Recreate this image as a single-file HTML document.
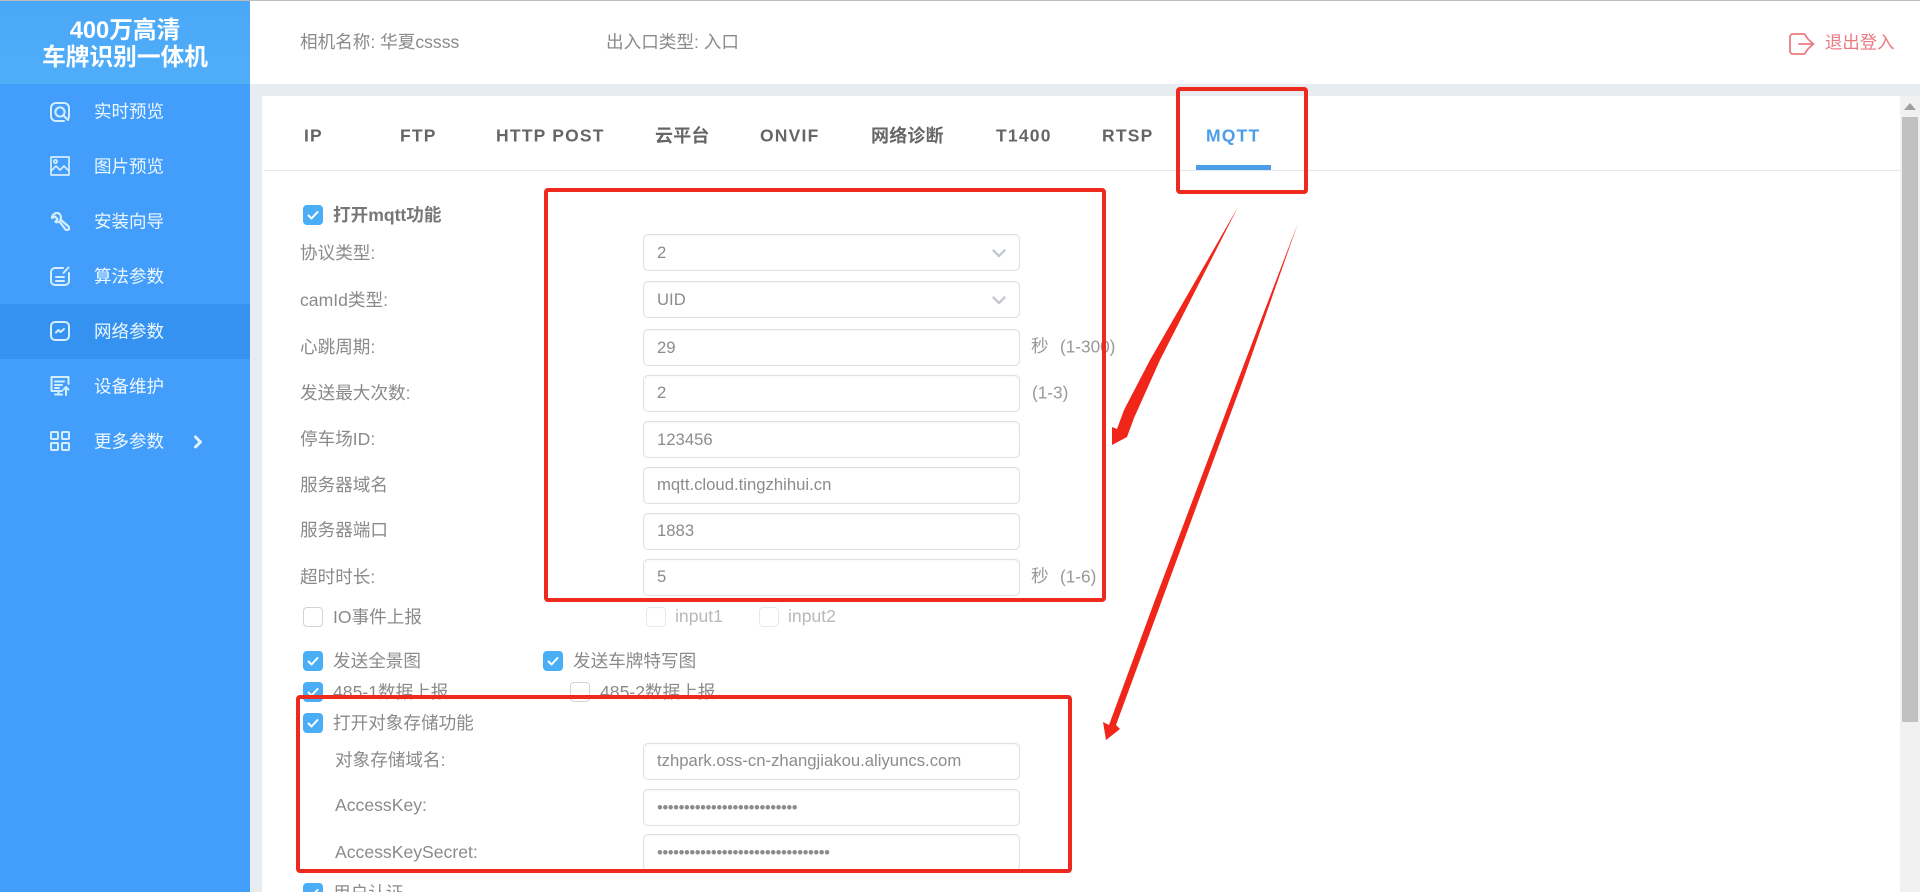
<!DOCTYPE html>
<html lang="zh-CN">
<head>
<meta charset="utf-8">
<title>400万高清车牌识别一体机</title>
<style>
html,body{margin:0;padding:0;width:1920px;height:892px;overflow:hidden;background:#e7ecf1;font-family:"Liberation Sans","Noto Sans CJK SC",sans-serif}
#wrap{position:relative;width:1920px;height:892px;overflow:hidden;contain:paint}
.a{position:absolute}
.t{position:absolute;white-space:nowrap;line-height:1;transform:translateY(-50%);font-size:17.6px;color:#8a8a8a}
#side{left:0;top:0;width:250px;height:892px;background:#429dfb}
#logo{left:0;top:0;width:250px;height:84px;background:linear-gradient(#4aa8f8,#4fadf8)}
#top{left:250px;top:0;width:1670px;height:84px;background:#fff}
#line{left:0;top:0;width:1920px;height:1px;background:#bcbcbc;z-index:3}
#card{left:262px;top:96px;width:1638px;height:796px;background:#fff;overflow:hidden}
#sb{left:1900px;top:96px;width:20px;height:796px;background:#f1f1f1}
#thumb{left:1902px;top:117px;width:16px;height:605px;background:#c1c1c1}
.m{position:absolute;left:94px;font-size:17.5px;color:#eef8ff;line-height:1;transform:translateY(-50%);white-space:nowrap}
.ic{position:absolute;left:50px;width:20px;height:20px;fill:none;stroke:#d5eeff;stroke-width:2;stroke-linecap:round;stroke-linejoin:round}
.tb{position:absolute;top:136px;font-size:17.5px;font-weight:bold;color:#666;letter-spacing:1.2px;line-height:1;transform:translateY(-50%);white-space:nowrap}
.i{position:absolute;left:643px;width:377px;height:37px;box-sizing:border-box;border:1px solid #dcdfe6;border-radius:5px;background:#fff;box-shadow:inset 0 1px 2px rgba(0,0,0,.04);font-size:16.7px;color:#8c8c8c;line-height:34px;padding-left:13px;white-space:nowrap;overflow:hidden}
.c{position:absolute;width:20px;height:20px;box-sizing:border-box;border-radius:4px;background:#49aef5}
.c svg{position:absolute;left:0;top:0;width:20px;height:20px;fill:none;stroke:#fff;stroke-width:2;stroke-linecap:round;stroke-linejoin:round}
.u{position:absolute;width:20px;height:20px;box-sizing:border-box;border-radius:4px;background:#fff;border:1px solid #d0d3d9}
.u.d{border-color:#e6e8ec}
.sel{position:absolute;left:992px;width:14px;height:9px;fill:none;stroke:#c4c8cf;stroke-width:2.4;stroke-linecap:round;stroke-linejoin:round}
.r{position:absolute;box-sizing:border-box;border:4px solid #ee2a1e;border-radius:4px;z-index:5}
</style>
</head>
<body>
<div id="wrap">
<div id="side" class="a"></div>
<div id="logo" class="a"></div>
<div id="top" class="a"></div>
<div id="line" class="a"></div>
<div id="card" class="a"></div>
<div id="sb" class="a"></div>
<div id="thumb" class="a"></div>
<svg class="a" style="left:1904px;top:103px;width:12px;height:8px;fill:#a0a0a0"><path d="M6 0L12 7H0Z"/></svg>

<div class="t" style="left:0;width:250px;top:32px;text-align:center;font-size:23.7px;font-weight:bold;color:#fff">400万高清</div>
<div class="t" style="left:0;width:250px;top:59px;text-align:center;font-size:23.7px;font-weight:bold;color:#fff">车牌识别一体机</div>

<div class="a" style="left:0;top:304px;width:250px;height:55px;background:#3592f0"></div>

<svg class="ic" style="top:102px" viewBox="0 0 20 20"><path d="M14 19H6a5 5 0 0 1-5-5V6a5 5 0 0 1 5-5h8a5 5 0 0 1 5 5v8a5 5 0 0 1-1 3"/><circle cx="10" cy="10" r="4.600"/><path d="M13.500 13.500L18 18"/></svg>
<div class="m" style="top:112px">实时预览</div>
<svg class="ic" style="top:156px;stroke-width:1.700" viewBox="0 0 20 20"><rect x="1" y="1" width="18" height="18"/><circle cx="5.500" cy="5.500" r="1.600"/><path d="M1 15l5-5 4 4 4-4 5 5"/></svg>
<div class="m" style="top:167px">图片预览</div>
<svg class="ic" style="top:211px;stroke-width:2.200" viewBox="0 0 20 20"><path d="M9 2.500A5 5 0 0 0 2 7L5 5.500 7.500 8 5.500 11A5 5 0 0 0 9.500 10.500L15.500 18.500A2 2 0 0 0 18.500 15.500L10.500 8.500A5 5 0 0 0 9 2.500Z"/></svg>
<div class="m" style="top:222px">安装向导</div>
<svg class="ic" style="top:266px" viewBox="0 0 20 20"><path d="M13 2H5a4 4 0 0 0-4 4v9a4 4 0 0 0 4 4h10a4 4 0 0 0 4-4V7"/><path d="M18.500 1.500L13.500 7"/><path d="M6 11h8M6 15h8"/></svg>
<div class="m" style="top:277px">算法参数</div>
<svg class="ic" style="top:321px" viewBox="0 0 20 20"><rect x="1" y="1" width="18" height="18" rx="4"/><path d="M6 11.500l2.500-2.500 2 2 3.500-3"/></svg>
<div class="m" style="top:332px">网络参数</div>
<svg class="ic" style="top:376px" viewBox="0 0 20 20"><path d="M12 15H1.500V1h17v7"/><path d="M5 5.500h9M5 9h7M5 12h4M5 18.500h7M8.500 15v3"/><path d="M16 19v-8M13.500 13.500L16 11l2.500 2.500"/></svg>
<div class="m" style="top:387px">设备维护</div>
<svg class="ic" style="top:431px" viewBox="0 0 20 20"><rect x="1" y="1" width="7" height="7" rx="1"/><rect x="12" y="1" width="7" height="7" rx="1"/><rect x="1" y="12" width="7" height="7" rx="1"/><rect x="12" y="12" width="7" height="7" rx="1"/></svg>
<div class="m" style="top:442px">更多参数</div>
<svg class="a" style="left:193px;top:435px;width:10px;height:14px;fill:none;stroke:#e4f4ff;stroke-width:3;stroke-linecap:round;stroke-linejoin:round"><path d="M2.500 2L7.500 7L2.500 12"/></svg>

<div class="t" style="left:300px;top:43px">相机名称: 华夏cssss</div>
<div class="t" style="left:606px;top:43px">出入口类型: 入口</div>
<svg class="a" style="left:1789px;top:33px;width:26px;height:22px;fill:none;stroke:#ec7b80;stroke-width:1.800;stroke-linecap:round;stroke-linejoin:round"><path d="M19 6L15.500 1H4a3 3 0 0 0-3 3v14a3 3 0 0 0 3 3h11.500l3.500-5"/><path d="M10 11h14M20 7l4.500 4-4.500 4"/></svg>
<div class="t" style="left:1825px;top:43px;color:#ea7a80;font-size:17.4px">退出登入</div>

<div class="tb" style="left:304px">IP</div>
<div class="tb" style="left:400px">FTP</div>
<div class="tb" style="left:496px">HTTP POST</div>
<div class="tb" style="left:655px;letter-spacing:.2px;font-size:18px">云平台</div>
<div class="tb" style="left:760px">ONVIF</div>
<div class="tb" style="left:871px;letter-spacing:.2px;font-size:18px">网络诊断</div>
<div class="tb" style="left:996px">T1400</div>
<div class="tb" style="left:1102px">RTSP</div>
<div class="tb" style="left:1206px;color:#4a9de8">MQTT</div>
<div class="a" style="left:264px;top:170px;width:1636px;height:1px;background:#e4e7ed"></div>
<div class="a" style="left:1196px;top:165px;width:75px;height:5px;background:#4a9de8"></div>

<div class="c" style="left:303px;top:205px"><svg viewBox="0 0 20 20"><path d="M5.500 10.500l3 3 6-6.500"/></svg></div>
<div class="t" style="left:333px;top:216px;font-weight:bold;color:#777">打开mqtt功能</div>

<div class="t" style="left:300px;top:254px">协议类型:</div>
<div class="t" style="left:300px;top:301px">camId类型:</div>
<div class="t" style="left:300px;top:348px">心跳周期:</div>
<div class="t" style="left:300px;top:394px">发送最大次数:</div>
<div class="t" style="left:300px;top:440px">停车场ID:</div>
<div class="t" style="left:300px;top:486px">服务器域名</div>
<div class="t" style="left:300px;top:531px">服务器端口</div>
<div class="t" style="left:300px;top:578px">超时时长:</div>

<div class="i" style="top:234px;line-height:35px">2</div>
<svg class="sel" style="top:249px"><path d="M1.500 1.500L7 7L12.500 1.500"/></svg>
<div class="i" style="top:281px;line-height:35px">UID</div>
<svg class="sel" style="top:296px"><path d="M1.500 1.500L7 7L12.500 1.500"/></svg>
<div class="i" style="top:329px;line-height:36px">29</div>
<div class="i" style="top:375px">2</div>
<div class="i" style="top:421px;line-height:36px">123456</div>
<div class="i" style="top:467px">mqtt.cloud.tingzhihui.cn</div>
<div class="i" style="top:513px">1883</div>
<div class="i" style="top:559px">5</div>

<div class="t" style="left:1031px;top:347px;color:#999">秒</div>
<div class="t" style="left:1060px;top:347px;color:#999;font-size:17.2px">(1-300)</div>
<div class="t" style="left:1032px;top:393px;color:#999;font-size:17.2px">(1-3)</div>
<div class="t" style="left:1031px;top:577px;color:#999">秒</div>
<div class="t" style="left:1060px;top:577px;color:#999;font-size:17.2px">(1-6)</div>

<div class="u" style="left:303px;top:607px"></div>
<div class="t" style="left:333px;top:618px">IO事件上报</div>
<div class="u d" style="left:646px;top:607px"></div>
<div class="t" style="left:675px;top:617px;color:#b8b8b8">input1</div>
<div class="u d" style="left:759px;top:607px"></div>
<div class="t" style="left:788px;top:617px;color:#b8b8b8">input2</div>

<div class="c" style="left:303px;top:651px"><svg viewBox="0 0 20 20"><path d="M5.500 10.500l3 3 6-6.500"/></svg></div>
<div class="t" style="left:333px;top:662px">发送全景图</div>
<div class="c" style="left:543px;top:651px"><svg viewBox="0 0 20 20"><path d="M5.500 10.500l3 3 6-6.500"/></svg></div>
<div class="t" style="left:573px;top:662px">发送车牌特写图</div>

<div class="c" style="left:303px;top:682px"><svg viewBox="0 0 20 20"><path d="M5.500 10.500l3 3 6-6.500"/></svg></div>
<div class="t" style="left:333px;top:693px">485-1数据上报</div>
<div class="u" style="left:570px;top:682px"></div>
<div class="t" style="left:600px;top:693px">485-2数据上报</div>

<div class="c" style="left:303px;top:713px"><svg viewBox="0 0 20 20"><path d="M5.500 10.500l3 3 6-6.500"/></svg></div>
<div class="t" style="left:333px;top:724px">打开对象存储功能</div>

<div class="t" style="left:335px;top:761px">对象存储域名:</div>
<div class="t" style="left:335px;top:806px">AccessKey:</div>
<div class="t" style="left:335px;top:853px">AccessKeySecret:</div>
<div class="i" style="top:743px">tzhpark.oss-cn-zhangjiakou.aliyuncs.com</div>
<div class="i" style="top:789px;letter-spacing:-.45px;line-height:35px">••••••••••••••••••••••••••</div>
<div class="i" style="top:834px;letter-spacing:-.45px;line-height:35px">••••••••••••••••••••••••••••••••</div>

<div class="c" style="left:303px;top:883px"><svg viewBox="0 0 20 20"><path d="M5.500 10.500l3 3 6-6.500"/></svg></div>
<div class="t" style="left:333px;top:894px">用户认证</div>

<div class="r" style="left:544px;top:188px;width:562px;height:414px"></div>
<div class="r" style="left:1176px;top:87px;width:132px;height:107px"></div>
<div class="r" style="left:296px;top:695px;width:776px;height:178px"></div>

<svg class="a" style="left:0;top:0;width:1920px;height:892px;z-index:6;pointer-events:none">
<polygon fill="#f0261a" points="1238,207 1160,360 1134,418 1127,437 1112,445 1112,427 1117,429 1124,410 1150,360"/>
<polygon fill="#f0261a" points="1298,223 1243,380 1162,600 1116,725 1120,729 1106,740 1103,722 1109,725 1155,600 1238,380"/>
</svg>
</div>
</body>
</html>
